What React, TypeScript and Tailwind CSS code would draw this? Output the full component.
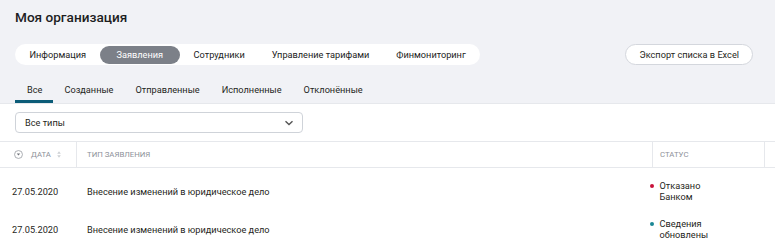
import React from "react";

const font = { fontFamily: "Roboto, 'Noto Sans', sans-serif" };

export default function App() {
  const tabs = ["Информация", "Заявления", "Сотрудники", "Управление тарифами", "Финмониторинг"];
  const sub = ["Все", "Созданные", "Отправленные", "Исполненные", "Отклонённые"];
  const rows = [
    { date: "27.05.2020", type: "Внесение изменений в юридическое дело", dot: "bg-[#c8123a]", s1: "Отказано", s2: "Банком" },
    { date: "27.05.2020", type: "Внесение изменений в юридическое дело", dot: "bg-[#1b8795]", s1: "Сведения", s2: "обновлены" },
  ];
  return (
    <div className="w-[775px] h-[245px] overflow-hidden bg-white text-[#1f1f22]" style={font}>
      <div className="bg-[#f1f2f6] border-b border-[#e6e8ec]">
        <div className="px-[15px] pt-[8px] h-[26px] text-[13.6px] leading-[18px] font-medium text-[#1d1d1f]">Моя организация</div>
        <div className="flex items-center justify-between pl-[15px] pr-[22px] mt-[18px]">
          <div className="flex items-center bg-white rounded-full h-[21px] pl-[1px] pr-[1px]">
            {tabs.map((t, i) => (
              <div
                key={t}
                className={
                  "h-[18px] flex items-center rounded-full text-[9.2px] " +
                  (i === 1 ? "bg-[#7c8088] text-white px-[17px]" : "text-[#222] px-[13.5px]")
                }
              >
                {t}
              </div>
            ))}
          </div>
          <div className="h-[21px] px-[13px] flex items-center rounded-full bg-white border border-[#d4d7dd] text-[9.2px]">
            Экспорт списка в Excel
          </div>
        </div>
        <div className="flex pl-[15px] mt-[14px]">
          {sub.map((t, i) => (
            <div
              key={t}
              className={
                "h-[24px] flex items-center text-[9.2px] border-b-[3px] " +
                (i === 0 ? "border-[#0b5c78] pl-[12px] pr-[11px]" : "border-transparent px-[11px]")
              }
            >
              {t}
            </div>
          ))}
        </div>
      </div>
      <div className="px-[15px] pt-[8px] pb-[8px]">
        <div className="w-[288px] h-[21px] border border-[#cfd3d9] rounded-[4px] flex items-center justify-between pl-[9px] pr-[8px] text-[9.2px]">
          <span>Все типы</span>
          <svg width="10" height="6" viewBox="0 0 10 6" fill="none">
            <path d="M1.5 1.2L5 4.5L8.5 1.2" stroke="#555" strokeWidth="1.4" />
          </svg>
        </div>
      </div>
      <div className="border-t border-[#e6e8ec]">
        <div className="flex h-[26px] items-center text-[7.8px] text-[#8d9199] uppercase border-b border-[#e6e8ec]">
          <div className="w-[77px] h-full flex items-center pl-[14px] border-r border-[#e6e8ec]">
            <svg width="9" height="9" viewBox="0 0 10 10">
              <circle cx="5" cy="5" r="4.4" fill="none" stroke="#9a9da3" strokeWidth="0.9" />
              <path d="M3.1 4h3.8L5 6.2z" fill="#6d7077" />
            </svg>
            <span className="ml-[8px]">Дата</span>
            <svg width="4" height="7" viewBox="0 0 4 7" className="ml-[6px]">
              <path d="M2 0.3L3.8 2.8H0.2z M2 6.7L3.8 4.2H0.2z" fill="#cdd0d4" />
            </svg>
          </div>
          <div className="flex-1 pl-[10px]">Тип заявления</div>
          <div className="w-[113px] h-full flex items-center pl-[7px] border-l border-r border-[#e6e8ec]">Статус</div>
          <div className="w-[10px]"></div>
        </div>
        <div className="pt-[4px]">
          {rows.map((r, i) => (
            <div key={i} className="flex h-[38px] items-center text-[9.2px]">
              <div className="w-[77px] pl-[12px] pt-[2px]">{r.date}</div>
              <div className="flex-1 pl-[10px] pt-[2px]">{r.type}</div>
              <div className="w-[124px] flex items-start leading-[11px]">
                <span className={"w-[3.5px] h-[3.5px] rounded-full mt-[4px] ml-[-1px] mr-[6px] shrink-0 " + r.dot}></span>
                <div>
                  <div>{r.s1}</div>
                  <div>{r.s2}</div>
                </div>
              </div>
            </div>
          ))}
        </div>
      </div>
    </div>
  );
}
